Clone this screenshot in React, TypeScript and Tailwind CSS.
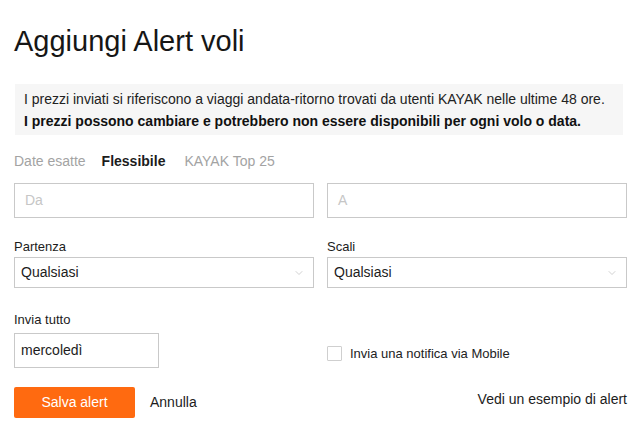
import { ChevronDown } from "lucide-react";

function Select({ value }: { value: string }) {
  return (
    <div className="flex h-[31px] items-center justify-between border border-[#c9c9c9] bg-white pl-[6px] pr-[8px]">
      <span className="text-[14px] text-[#1c1c1c]">{value}</span>
      <ChevronDown className="h-[12px] w-[12px] text-[#b5b5b5]" strokeWidth={1.25} />
    </div>
  );
}

export default function App() {
  return (
    <div
      className="h-[433px] w-[643px] overflow-hidden bg-white text-[#1c1c1c]"
      style={{ fontFamily: '"Liberation Sans", Arial, sans-serif' }}
    >
      <div className="ml-[14px] w-[613px] pt-[24px]">
        {/* Title */}
        <h1 className="text-[29px] leading-[34px] font-normal text-[#161616]">
          Aggiungi Alert voli
        </h1>

        {/* Info box */}
        <div className="mt-[26px] ml-[1px] w-[608px] bg-[#f6f6f6] pl-[9px] pt-[4px] pb-[3px] text-[14px] leading-[22px]">
          <div className="text-[#222]">
            I prezzi inviati si riferiscono a viaggi andata-ritorno trovati da utenti KAYAK nelle ultime 48 ore.
          </div>
          <div className="font-bold text-[#111]">
            I prezzi possono cambiare e potrebbero non essere disponibili per ogni volo o data.
          </div>
        </div>

        {/* Tabs */}
        <div className="mt-[16px] flex items-center gap-[16px] text-[14px] leading-[20px]">
          <span className="text-[#a3a3a3]">Date esatte</span>
          <span className="font-bold text-[#1c1c1c]">Flessibile</span>
          <span className="ml-[3px] text-[#a3a3a3]">KAYAK Top 25</span>
        </div>

        {/* From / To */}
        <div className="mt-[12px] grid grid-cols-2 gap-[13px]">
          <div className="flex h-[35px] items-center border border-[#c9c9c9] pl-[10px] text-[14px] text-[#c6c6c6]">
            Da
          </div>
          <div className="flex h-[35px] items-center border border-[#c9c9c9] pl-[10px] text-[14px] text-[#c6c6c6]">
            A
          </div>
        </div>

        {/* Partenza / Scali */}
        <div className="mt-[21px] grid grid-cols-2 gap-[13px]">
          <div>
            <div className="mb-[2px] text-[13px] leading-[16px]">Partenza</div>
            <Select value="Qualsiasi" />
          </div>
          <div>
            <div className="mb-[2px] text-[13px] leading-[16px]">Scali</div>
            <Select value="Qualsiasi" />
          </div>
        </div>

        {/* Invia tutto / Mobile */}
        <div className="mt-[24px] grid grid-cols-2 gap-[13px]">
          <div>
            <div className="mb-[5px] text-[13px] leading-[16px]">Invia tutto</div>
            <div className="flex h-[35px] w-[145px] items-center border border-[#c9c9c9] pl-[6px] text-[14px]">
              mercoledì
            </div>
          </div>
          <div className="flex items-center gap-[8px] pt-[27px]">
            <div className="h-[15px] w-[15px] rounded-[1px] border border-[#cfcfcf] bg-white" />
            <span className="text-[13px] leading-[16px] text-[#222]">Invia una notifica via Mobile</span>
          </div>
        </div>

        {/* Actions */}
        <div className="mt-[19px] flex items-center">
          <button className="h-[31px] w-[121px] rounded-[2px] bg-[#ff6a10] text-[14px] text-white">
            Salva alert
          </button>
          <span className="ml-[15px] text-[14px] text-[#1c1c1c]">Annulla</span>
          <span className="ml-auto pb-[7px] text-[14px] text-[#1c1c1c]">Vedi un esempio di alert</span>
        </div>
      </div>
    </div>
  );
}
